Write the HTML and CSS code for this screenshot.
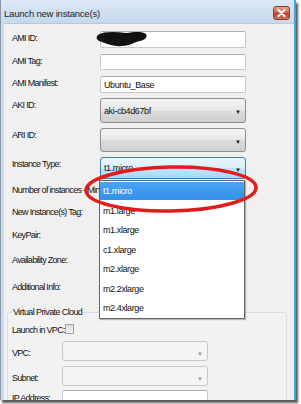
FILE: index.html
```html
<!DOCTYPE html>
<html>
<head>
<meta charset="utf-8">
<link rel="stylesheet" href="styles.css">
</head>
<body>
<div class="window">
  <div class="titlebar">
    <span class="title">Launch new instance(s)</span>
    <span class="close">
      <svg width="9" height="8" viewBox="0 0 9 8"><path d="M1.5 1 L7.5 7 M7.5 1 L1.5 7" stroke="#fff" stroke-width="2" stroke-linecap="round"/></svg>
    </span>
  </div>
  <div class="content">
    <div class="form">
      <div class="row r-ami"><span class="label">AMI ID:</span><div class="input">
        <svg class="redact" width="52" height="18" viewBox="0 0 52 18"><path d="M2 5 C8 1 20 2 30 3 C38 2 46 1 50 4 C52 8 48 10 44 11 C38 12 34 16 26 16 C18 17 12 14 6 12 C1 11 -1 8 2 5 Z" fill="#111"/></svg>
      </div></div>
      <div class="row r-tag"><span class="label">AMI Tag:</span><div class="input"></div></div>
      <div class="row r-man"><span class="label">AMI Manifest:</span><div class="input"><span class="val">Ubuntu_Base</span></div></div>
      <div class="row r-aki"><span class="label">AKI ID:</span><div class="select"><span class="val">aki-cb4d67bf</span><span class="arrow">&#9660;</span></div></div>
      <div class="row r-ari"><span class="label">ARI ID:</span><div class="select"><span class="val"></span><span class="arrow">&#9660;</span></div></div>
      <div class="row r-type"><span class="label">Instance Type:</span><div class="select focus"><span class="val">t1.micro</span><span class="arrow">&#9660;</span></div></div>
      <div class="row r-num"><span class="label">Number of instances - Min:</span></div>
      <div class="row r-ntag"><span class="label">New Instance(s) Tag:</span></div>
      <div class="row r-key"><span class="label">KeyPair:</span></div>
      <div class="row r-az"><span class="label">Availability Zone:</span></div>
      <div class="row r-info"><span class="label">Additional Info:</span></div>
    </div>
    <fieldset class="vpc">
      <legend>Virtual Private Cloud</legend>
      <div class="vrow v-launch"><span class="label">Launch in VPC:</span><span class="check"></span></div>
      <div class="vrow v-vpc"><span class="label">VPC:</span><div class="select disabled"><span class="val"></span><span class="arrow">&#9660;</span></div></div>
      <div class="vrow v-sub"><span class="label">Subnet:</span><div class="select disabled"><span class="val"></span><span class="arrow">&#9660;</span></div></div>
      <div class="vrow v-ip"><span class="label">IP Address:</span><div class="input"></div></div>
    </fieldset>
    <ul class="dropdown">
      <li class="sel">t1.micro</li>
      <li>m1.large</li>
      <li>m1.xlarge</li>
      <li>c1.xlarge</li>
      <li>m2.xlarge</li>
      <li>m2.2xlarge</li>
      <li>m2.4xlarge</li>
    </ul>
    <svg class="circle" width="180" height="56" viewBox="0 0 180 56"><ellipse cx="90" cy="28" rx="85" ry="22" fill="none" stroke="#e41b1b" stroke-width="3.5" transform="rotate(-1 90 28)"/></svg>
  </div>
</div>
</body>
</html>
```
FILE: styles.css
```css
html, body {
  margin: 0;
  padding: 0;
  background: #ffffff;
}
body {
  width: 301px;
  height: 404px;
  overflow: hidden;
  font-family: "Liberation Sans", Arial, sans-serif;
  font-size: 9px;
  letter-spacing: -0.4px;
  color: #111;
}
.window {
  width: 296px;
  height: 400px;
  box-sizing: border-box;
  border-left: 1px solid #8a96a3;
  border-right: 2px solid #3ba6dc;
  background: #c9dbee;
  box-shadow: 2px 3px 2px rgba(0,0,0,0.65);
  display: flex;
  flex-direction: column;
  overflow: hidden;
}
.titlebar {
  height: 23px;
  flex: none;
  display: flex;
  align-items: center;
  justify-content: space-between;
  padding: 0 4px 0 3px;
  background: linear-gradient(#dce8f5, #c5d8ec);
}
.title {
  color: #1e1e1e;
  font-size: 9.5px;
  letter-spacing: -0.2px;
  padding-top: 3px;
}
.close {
  width: 17px;
  height: 14px;
  box-sizing: border-box;
  margin-top: 2px;
  border: 1px solid #8a3a2c;
  border-radius: 3px;
  background: linear-gradient(#e8a493, #d25a44 50%, #c13b26 55%, #d8735a);
  display: flex;
  align-items: center;
  justify-content: center;
}
.content {
  position: relative;
  flex: 1;
  margin-left: 3px;
  background: #f0f0f0;
  border-top: 1px solid #b9c7d6;
  padding: 7px 0 0 8px;
}
.form {
  display: flex;
  flex-direction: column;
}
.row {
  display: grid;
  grid-template-columns: 88px 146px;
  align-items: start;
}
.label {
  font-size: 9px;
  letter-spacing: -0.7px;
  line-height: 12px;
  padding-top: 1px;
  white-space: nowrap;
}
.r-ami { height: 23px; }
.r-tag { height: 22px; }
.r-man { height: 22px; }
.r-aki { height: 30px; }
.r-ari { height: 29px; }
.r-type { height: 26px; }
.r-num { height: 22px; }
.r-ntag { height: 23px; }
.r-key { height: 25px; }
.r-az { height: 27px; }
.r-info { height: 26px; }
.r-ami .input, .r-man .input { height: 17px; }
.r-tag .input { height: 16px; }
.r-aki .select { height: 25px; }
.r-ari .select { height: 24px; }
.r-type .select { height: 22px; }
.input {
  box-sizing: border-box;
  background: #fff;
  border: 1px solid #c4c8cf;
  border-top-color: #abadb3;
  border-radius: 2px;
  display: flex;
  align-items: center;
  position: relative;
}
.input .val {
  padding-left: 3px;
}
.redact {
  position: absolute;
  left: -5px;
  top: -2px;
}
.select {
  box-sizing: border-box;
  border: 1px solid #8e8f8f;
  border-radius: 3px;
  background: linear-gradient(#f4f4f4, #e8e8e8 50%, #dcdcdc 52%, #cfcfcf);
  display: flex;
  align-items: center;
  justify-content: space-between;
  padding: 0 4px 0 3px;
}
.select .arrow {
  font-size: 6px;
  letter-spacing: 0;
  color: #1a1a1a;
  padding-top: 3px;
}
.select.focus {
  border-color: #3c7fb1;
  background: linear-gradient(#eaf6fd, #d9f0fc 50%, #bee6fd 52%, #a7d9f5);
}
.select.disabled {
  border-color: #c6c9cc;
  background: #f4f4f4;
}
.select.disabled .arrow {
  color: #9a9a9a;
  padding-top: 6px;
}
.vpc {
  margin: 0 0 0 -5px;
  padding: 6px 0 0 4px;
  width: 280px;
  box-sizing: border-box;
  border: 1px solid #d5dfe5;
  border-radius: 3px;
  background: #f2f2f2;
  min-height: 120px;
}
.vpc legend {
  padding: 0 1px;
  margin-left: 0;
  line-height: 12px;
  font-size: 9px;
  letter-spacing: -0.6px;
}
.vrow {
  display: grid;
  grid-template-columns: 50px 146px;
  align-items: start;
}
.v-launch { height: 17px; }
.v-vpc { height: 25px; }
.v-sub { height: 24px; }
.v-ip { height: 20px; }
.v-launch .label { padding-top: 0; }
.check {
  width: 9px;
  height: 10px;
  box-sizing: border-box;
  margin-left: 3px;
  border: 1px solid #a0a0a0;
  background: linear-gradient(#dcdcdc, #f6f6f6);
}
.v-vpc .select, .v-sub .select { height: 20px; }
.v-vpc .label, .v-sub .label { padding-top: 6px; }
.v-ip .input { height: 18px; }
.v-ip .label { padding-top: 2px; }
.dropdown {
  position: absolute;
  left: 95px;
  top: 156px;
  width: 146px;
  height: 139px;
  box-sizing: border-box;
  margin: 0;
  padding: 1px 0 0;
  list-style: none;
  background: #fff;
  border: 1px solid #646464;
  box-shadow: 1px 1px 1px rgba(0,0,0,0.25);
}
.dropdown li {
  height: 19.5px;
  line-height: 19.5px;
  padding-left: 3px;
}
.dropdown li.sel {
  background: linear-gradient(#4aa3f5, #3391ea);
  color: #fff;
  height: 18px;
  line-height: 18px;
  margin-bottom: 1.5px;
}
.circle {
  position: absolute;
  left: 77px;
  top: 137px;
}
```
